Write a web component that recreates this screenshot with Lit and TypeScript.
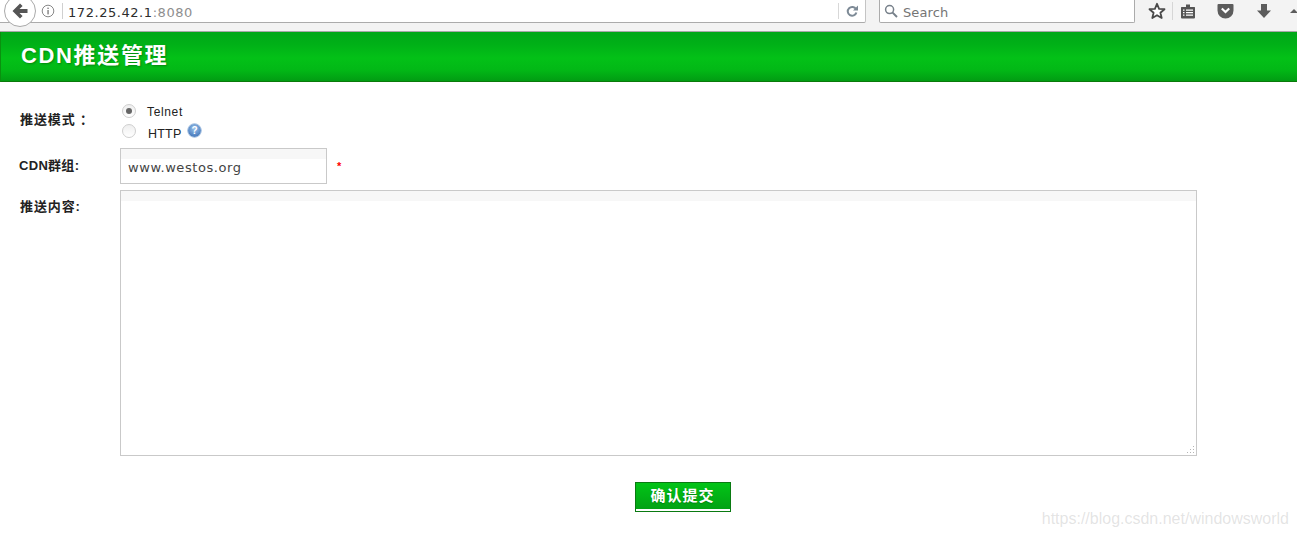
import { LitElement, html, css } from "lit";
import { customElement } from "lit/decorators.js";

@customElement("app-root")
export class AppRoot extends LitElement {
  static styles = css`
    :host { display: block; width: 1297px; height: 537px; overflow: hidden; background: #fff; position: relative; font-family: "Liberation Sans", "Noto Sans CJK SC", sans-serif; }
    .chrome { height: 31px; box-sizing: content-box; background: #f3f3f3; border-bottom: 1px solid #a8a8a8; display: flex; align-items: flex-start; font-family: "DejaVu Sans", sans-serif; }
    .urlbar { width: 866px; height: 23px; box-sizing: border-box; background: #fff; border-bottom: 1px solid #ababab; border-right: 1px solid #c4c4c4; border-bottom-right-radius: 2px; display: flex; align-items: center; position: relative; flex: none; }
    .back { position: absolute; left: 4px; top: -5px; width: 32px; height: 32px; box-sizing: border-box; border-radius: 50%; border: 1px solid #a9a9a9; background: #fff; display: flex; align-items: center; justify-content: center; }
    .info { margin-left: 41px; width: 14px; height: 14px; flex: none; }
    .sep { width: 1px; height: 16px; background: #d0d0d0; flex: none; margin-left: 7px; }
    .addr { margin-left: 5px; padding-top: 3px; font-size: 13px; letter-spacing: 0.55px; color: #2d2d2d; flex: 1; white-space: nowrap; }
    .addr span { color: #8e8e8e; }
    .reload { width: 26px; height: 16px; border-left: 1px solid #d8d8d8; display: flex; align-items: center; justify-content: center; flex: none; }
    .search { margin-left: 13px; width: 256px; height: 23px; flex: none; box-sizing: border-box; background: #fff; border: 1px solid #ababab; border-top: 0; border-radius: 0 0 2px 2px; display: flex; align-items: center; padding-left: 4px; gap: 5px; font-size: 13px; letter-spacing: 0.1px; color: #757575; }
    .search span { padding-top: 3px; }
    .tools { display: flex; align-items: center; height: 22px; margin-left: 13px; position: relative; }
    .tools svg { flex: none; display: block; }
    .vsep { width: 1px; height: 18px; background: #d6d6d6; margin: 0 7px 0 6px; }
    .banner { height: 49px; box-sizing: content-box; border-bottom: 1px solid #0a7a0a; border-left: 1px solid #0a900f; background: linear-gradient(#00a818 0, #00b017 12px, #03c117 26px, #02b816 38px, #019c13 49px); display: flex; align-items: center; padding-left: 20px; }
    .banner h1 { margin: 0; font-size: 22px; line-height: 26px; font-weight: 700; color: #fff; letter-spacing: 1.65px; text-shadow: 1px 1px 2px rgba(0,70,0,.45); position: relative; top: -1px; }
    .form { padding: 18px 100px 0 20px; display: grid; grid-template-columns: 100px 1077px; row-gap: 6px; }
    .label { font-size: 13px; font-weight: 700; color: #222; white-space: nowrap; }
    .l1 { padding-top: 9px; letter-spacing: 0.9px; white-space: pre; }
    .l2 { padding-top: 7px; margin-left: -1px; letter-spacing: 0.3px; }
    .l3 { padding-top: 6px; letter-spacing: 0.9px; }
    .modes { height: 42px; display: flex; flex-direction: column; font-size: 12px; color: #222; }
    .opt { height: 21px; display: flex; align-items: center; padding-left: 2px; }
    .radio { width: 14px; height: 14px; box-sizing: border-box; border-radius: 50%; border: 1px solid #cfcfcf; background: linear-gradient(#efefef, #fff); display: flex; align-items: center; justify-content: center; flex: none; }
    .radio i { width: 6px; height: 6px; border-radius: 50%; background: #666; display: block; }
    .opt:nth-child(2) .radio { margin-top: -2px; }
    .opt .t { margin-left: 11px; position: relative; top: 1px; letter-spacing: 0.65px; }
    .opt:nth-child(2) .t { margin-left: 12px; top: 2px; font-size: 12.5px; letter-spacing: 0.2px; }
    .help { margin-left: 6px; position: relative; top: -1px; }
    .cdn { display: flex; align-items: center; height: 36px; }
    .input { width: 207px; height: 36px; box-sizing: border-box; border: 1px solid #c9c9c9; background: linear-gradient(#f7f7f7 0, #f7f7f7 10px, #fff 10px); font: 13px "DejaVu Sans", sans-serif; color: #444; letter-spacing: 0.58px; padding: 2px 0 0 7px; display: flex; align-items: center; }
    .req { color: #f00; font-size: 11px; font-weight: 700; margin-left: 10px; }
    .area { width: 1077px; height: 266px; box-sizing: border-box; border: 1px solid #c9c9c9; background: linear-gradient(#f7f7f7 0, #f7f7f7 10px, #fff 10px); position: relative; }
    .grip { position: absolute; right: 0; bottom: 0; }
    .actions { display: flex; justify-content: center; padding: 26px 0 0 68px; }
    .submit { width: 96px; height: 30px; box-sizing: border-box; border: 1px solid #0a7a12; background: #fff; padding: 0; display: flex; align-items: flex-start; }
    .submit div { width: 100%; height: 26px; background: linear-gradient(#02c417, #02a214); color: #fff; font: 700 15px/24px "Noto Sans CJK SC", sans-serif; text-align: center; letter-spacing: 1px; text-shadow: 0 1px 1px rgba(0,70,0,.4); }
    .mark { position: absolute; right: 8px; bottom: 9px; font-size: 16px; color: rgba(170,170,170,.32); white-space: nowrap; }
  `;

  render() {
    return html`
      <div class="chrome">
        <div class="urlbar">
          <div class="back">
            <svg width="20" height="20" viewBox="0 0 20 20"><path d="M10 2.500 2.500 10l7.500 7.500 2.600-2.600-3.100-3H17.500V8.100H9.500l3.100-3z" fill="#555"/></svg>
          </div>
          <svg class="info" viewBox="0 0 14 14"><circle cx="7" cy="7" r="5.800" fill="none" stroke="#888" stroke-width="1"/><rect x="6.400" y="6" width="1.300" height="4.400" fill="#777"/><rect x="6.400" y="3.600" width="1.300" height="1.400" fill="#777"/></svg>
          <div class="sep"></div>
          <div class="addr">172.25.42.1<span>:8080</span></div>
          <div class="reload">
            <svg width="14" height="14" viewBox="0 0 14 14"><path d="M11 5.200A4.400 4.400 0 1 0 11.400 8.500" fill="none" stroke="#7d8a96" stroke-width="2"/><path d="M8 6.400h5V1.600z" fill="#7d8a96"/></svg>
          </div>
        </div>
        <div class="search">
          <svg width="14" height="14" viewBox="0 0 14 14"><circle cx="5.600" cy="5.600" r="4" fill="none" stroke="#77808a" stroke-width="1.500"/><path d="M8.600 8.600 13 13" stroke="#77808a" stroke-width="2"/></svg>
          <span>Search</span>
        </div>
        <div class="tools">
          <svg width="18" height="18" viewBox="0 0 18 18"><path d="M9 1.800 11.100 6.800l5.400.4-4.100 3.500 1.300 5.300L9 13.200 4.300 16l1.300-5.300L1.500 7.200l5.400-.4z" fill="#fff" stroke="#4a4a4a" stroke-width="1.800" stroke-linejoin="round"/></svg>
          <div class="vsep"></div>
          <svg width="16" height="16" viewBox="0 0 16 16"><path d="M1.500 4h13a.8.8 0 0 1 .5.500v10a1 1 0 0 1-1 1H2a1 1 0 0 1-1-1V4.500a.8.8 0 0 1 .5-.5z M6 4.500V1.500h4v3z" fill="#555"/><path d="M3 6.500h1.500v1.300H3zM6 6.500h7v1.300H6zM3 9h1.500v1.300H3zM6 9h7v1.300H6zM3 11.500h1.500v1.300H3zM6 11.500h7v1.300H6z" fill="#fff"/></svg>
          <svg style="margin-left:21px" width="17" height="16" viewBox="0 0 17 16"><path d="M1.500 1h14a1 1 0 0 1 1 1v5.500a8 8 0 0 1-16 0V2a1 1 0 0 1 1-1z" fill="#5c5c5c"/><path d="M4.800 5.500 8.500 9l3.700-3.500" fill="none" stroke="#fff" stroke-width="2.200"/></svg>
          <svg style="margin-left:22px" width="16" height="16" viewBox="0 0 16 16"><path d="M5 1h6v6.500h4L8 15 1 7.500h4z" fill="#5c5c5c"/></svg>
          <svg style="margin-left:16px" width="12" height="16" viewBox="0 0 12 16"><path d="M6 6 2 10h8z" fill="#5c5c5c"/></svg>
        </div>
      </div>
      <div class="banner"><h1>CDN推送管理</h1></div>
      <div class="form">
        <div class="label l1">推送模式 ：</div>
        <div class="modes">
          <div class="opt"><span class="radio"><i></i></span><span class="t">Telnet</span></div>
          <div class="opt"><span class="radio"></span><span class="t">HTTP</span>
            <svg class="help" width="15" height="15" viewBox="0 0 15 15"><defs><radialGradient id="h" cx="50%" cy="35%" r="65%"><stop offset="0" stop-color="#9cc4ec"/><stop offset="1" stop-color="#3f73b8"/></radialGradient></defs><circle cx="7.500" cy="7.500" r="6.800" fill="url(#h)" stroke="#a9c3e2"/><text x="7.500" y="11" text-anchor="middle" font-family="Liberation Sans" font-weight="700" font-size="10" fill="#fff">?</text></svg>
          </div>
        </div>
        <div class="label l2">CDN群组:</div>
        <div class="cdn"><div class="input">www.westos.org</div><span class="req">*</span></div>
        <div class="label l3">推送内容:</div>
        <div class="area">
          <svg class="grip" width="10" height="10" viewBox="0 0 10 10"><g fill="#b5b5b5"><rect x="7" y="1" width="1" height="1"/><rect x="7" y="4" width="1" height="1"/><rect x="4" y="4" width="1" height="1"/><rect x="7" y="7" width="1" height="1"/><rect x="4" y="7" width="1" height="1"/><rect x="1" y="7" width="1" height="1"/></g></svg>
        </div>
      </div>
      <div class="actions"><button class="submit"><div>确认提交</div></button></div>
      <div class="mark">https://blog.csdn.net/windowsworld</div>
    `;
  }
}
